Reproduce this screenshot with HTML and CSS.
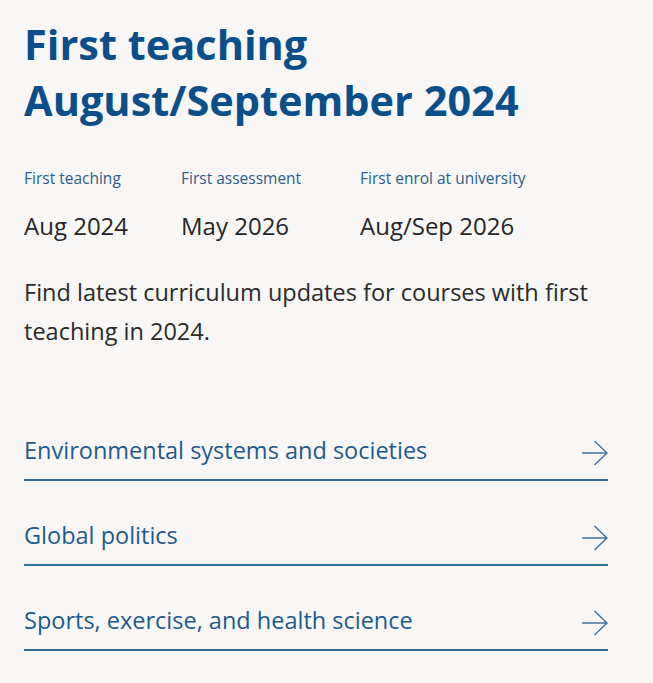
FILE: index.html
```html
<!DOCTYPE html>
<html lang="en">
<head>
<meta charset="utf-8">
<title>First teaching August/September 2024</title>
<link rel="stylesheet" href="styles.css">
</head>
<body>
<main class="page">
  <h1 class="title">First teaching<br>August/September 2024</h1>
  <dl class="dates">
    <div class="date-col col-1">
      <dt class="date-label">First teaching</dt>
      <dd class="date-value">Aug 2024</dd>
    </div>
    <div class="date-col col-2">
      <dt class="date-label">First assessment</dt>
      <dd class="date-value">May 2026</dd>
    </div>
    <div class="date-col col-3">
      <dt class="date-label">First enrol at university</dt>
      <dd class="date-value">Aug/Sep 2026</dd>
    </div>
  </dl>
  <p class="intro">Find latest curriculum updates for courses with first teaching in 2024.</p>
  <ul class="links">
    <li class="link-item"><a class="link-row" href="#"><span class="link-text">Environmental systems and societies</span><svg class="arrow" viewBox="0 0 26 26" width="26" height="26" aria-hidden="true"><path d="M0 13H25M12.5 1L25 13L12.5 25" fill="none" stroke="currentColor" stroke-width="1.5"/></svg></a></li>
    <li class="link-item"><a class="link-row" href="#"><span class="link-text">Global politics</span><svg class="arrow" viewBox="0 0 26 26" width="26" height="26" aria-hidden="true"><path d="M0 13H25M12.5 1L25 13L12.5 25" fill="none" stroke="currentColor" stroke-width="1.5"/></svg></a></li>
    <li class="link-item"><a class="link-row" href="#"><span class="link-text">Sports, exercise, and health science</span><svg class="arrow" viewBox="0 0 26 26" width="26" height="26" aria-hidden="true"><path d="M0 13H25M12.5 1L25 13L12.5 25" fill="none" stroke="currentColor" stroke-width="1.5"/></svg></a></li>
  </ul>
</main>
</body>
</html>
```

FILE: styles.css
```css
html, body {
  margin: 0;
  padding: 0;
  background: #f8f7f6;
}

body {
  font-family: "Open Sans", "Noto Sans", sans-serif;
  color: #262626;
}

.page {
  padding: 16px 45px 0 24px;
}

.title {
  margin: 0;
  font-size: 41.5px;
  line-height: 56px;
  font-weight: 700;
  color: #0a4f8a;
}

.dates {
  display: grid;
  grid-template-columns: 157px 179px auto;
  margin: 40px 0 0;
}

.date-col {
  display: flex;
  flex-direction: column;
  gap: 23px;
}

.date-label {
  font-size: 15.5px;
  line-height: 20px;
  font-weight: 500;
  color: #2c5d88;
}

.date-value {
  margin: 0;
  font-size: 24px;
  line-height: 30px;
  color: #262626;
}

.intro {
  margin: 32px 0 0;
  font-size: 23.5px;
  line-height: 39px;
  color: #2a2a2a;
}

.links {
  list-style: none;
  margin: 80px 0 0;
  padding: 0;
}

.link-item {
  border-bottom: 2px solid #356d97;
}

.link-item + .link-item {
  margin-top: 35px;
}

.link-row {
  display: flex;
  align-items: center;
  justify-content: space-between;
  height: 30px;
  padding: 4px 0 14px;
  text-decoration: none;
  color: #1f5a8c;
  font-size: 23.5px;
  line-height: 30px;
}

.arrow {
  color: #4274a0;
  flex: none;
  transform: translateY(3px);
}
```
